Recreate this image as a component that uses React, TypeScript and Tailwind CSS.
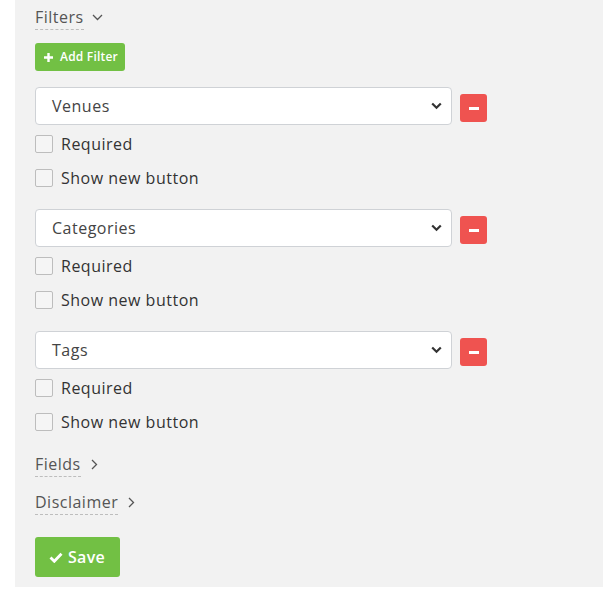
import React from "react";

const font = { fontFamily: '"Open Sans", "Liberation Sans", sans-serif' };

function Chevron({ dir }: { dir: "down" | "right" }) {
  return dir === "down" ? (
    <svg width="11" height="7" viewBox="0 0 11 7" className="ml-[8px]">
      <path d="M1 1l4.5 4.5L10 1" fill="none" stroke="#555" strokeWidth="1.3" />
    </svg>
  ) : (
    <svg width="7" height="11" viewBox="0 0 7 11" className="ml-[10px]">
      <path d="M1 1l4.5 4.5L1 10" fill="none" stroke="#555" strokeWidth="1.3" />
    </svg>
  );
}

function Heading({ label, dir }: { label: string; dir: "down" | "right" }) {
  return (
    <div className="flex items-center h-[25px]">
      <span className="h-[25px] leading-[24px] text-[16px] tracking-[0.5px] text-[#555] border-b border-dashed border-[#bdbdbd]">
        {label}
      </span>
      <Chevron dir={dir} />
    </div>
  );
}

function Check({ label }: { label: string }) {
  return (
    <div className="flex items-center h-[24px]">
      <div className="w-[18px] h-[18px] bg-[#f5f5f5] border border-[#bdbdbd] rounded-[2px]" />
      <span className="ml-[8px] text-[16px] tracking-[0.5px] text-[#333] leading-[22px]">{label}</span>
    </div>
  );
}

function Group({ label }: { label: string }) {
  return (
    <div className="flex flex-col">
      <div className="flex items-start">
        <div className="w-[417px] h-[38px] bg-white border border-[#cfd2d6] rounded-[4px] flex items-center justify-between pl-[16px] pr-[9px]">
          <span className="text-[16px] tracking-[0.5px] text-[#444]">{label}</span>
          <svg width="11" height="8" viewBox="0 0 11 8">
            <path d="M1.2 1.5l4.3 4.3 4.3-4.3" fill="none" stroke="#333" strokeWidth="2.2" />
          </svg>
        </div>
        <div className="ml-[8px] mt-[7px] w-[27px] h-[28px] bg-[#ef5350] rounded-[3px] flex items-center justify-center">
          <div className="w-[10px] h-[3px] bg-white" />
        </div>
      </div>
      <div className="mt-[7px] flex flex-col gap-[10px]">
        <Check label="Required" />
        <Check label="Show new button" />
      </div>
    </div>
  );
}

export default function App() {
  return (
    <div className="w-[603px] h-[608px] bg-white" style={font}>
      <div className="ml-[15px] bg-[#f2f2f2] pl-[20px] pt-[5px] pb-[10px] flex flex-col">
        <Heading label="Filters" dir="down" />
        <div className="mt-[13px]">
          <button className="h-[28px] w-[90px] bg-[#72c044] rounded-[3px] flex items-center pl-[9px] text-white text-[12px] font-semibold">
            <svg width="9" height="9" viewBox="0 0 9 9">
              <path d="M4.5 0v9M0 4.5h9" stroke="white" strokeWidth="2.4" />
            </svg>
            <span className="ml-[7px] tracking-[0.2px]">Add Filter</span>
          </button>
        </div>
        <div className="mt-[16px] flex flex-col gap-[19px]">
          <Group label="Venues" />
          <Group label="Categories" />
          <Group label="Tags" />
        </div>
        <div className="mt-[18px]">
          <Heading label="Fields" dir="right" />
        </div>
        <div className="mt-[13px]">
          <Heading label="Disclaimer" dir="right" />
        </div>
        <div className="mt-[22px]">
          <button className="h-[40px] w-[85px] bg-[#72c044] rounded-[3px] flex items-center pl-[14px] text-white text-[16px] font-semibold">
            <svg width="14" height="11" viewBox="0 0 14 11">
              <path d="M1.5 5.5l3.8 3.8L12.5 1.8" fill="none" stroke="white" strokeWidth="2.8" />
            </svg>
            <span className="ml-[5px] tracking-[0.3px]">Save</span>
          </button>
        </div>
      </div>
    </div>
  );
}
